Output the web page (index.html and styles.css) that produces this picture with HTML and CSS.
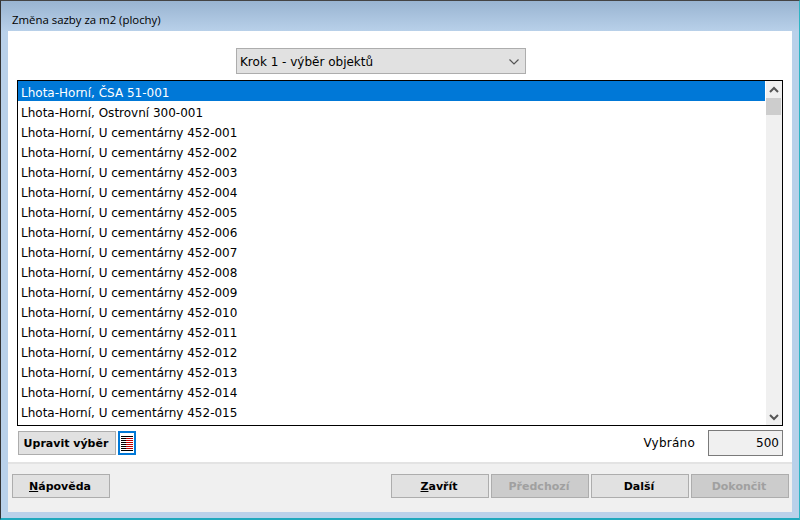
FILE: index.html
```html
<!DOCTYPE html>
<html lang="cs">
<head>
<meta charset="utf-8">
<title>Změna sazby za m2 (plochy)</title>
<link rel="stylesheet" href="styles.css">
</head>
<body>
<div class="window">
  <div class="titlebar">Změna sazby za m2 (plochy)</div>
  <div class="client">
    <div class="main">
      <div class="step-row">
        <div class="select">
          <span class="select-text">Krok 1 - výběr objektů</span>
          <svg class="chev" width="10" height="6" viewBox="0 0 10 6"><path d="M0.5 0.5 L5 5 L9.5 0.5" fill="none" stroke="#555" stroke-width="1.2"/></svg>
        </div>
      </div>
      <div class="list">
        <div class="rows">
          <div class="row selected">Lhota-Horní, ČSA 51-001</div>
          <div class="row">Lhota-Horní, Ostrovní 300-001</div>
          <div class="row">Lhota-Horní, U cementárny 452-001</div>
          <div class="row">Lhota-Horní, U cementárny 452-002</div>
          <div class="row">Lhota-Horní, U cementárny 452-003</div>
          <div class="row">Lhota-Horní, U cementárny 452-004</div>
          <div class="row">Lhota-Horní, U cementárny 452-005</div>
          <div class="row">Lhota-Horní, U cementárny 452-006</div>
          <div class="row">Lhota-Horní, U cementárny 452-007</div>
          <div class="row">Lhota-Horní, U cementárny 452-008</div>
          <div class="row">Lhota-Horní, U cementárny 452-009</div>
          <div class="row">Lhota-Horní, U cementárny 452-010</div>
          <div class="row">Lhota-Horní, U cementárny 452-011</div>
          <div class="row">Lhota-Horní, U cementárny 452-012</div>
          <div class="row">Lhota-Horní, U cementárny 452-013</div>
          <div class="row">Lhota-Horní, U cementárny 452-014</div>
          <div class="row">Lhota-Horní, U cementárny 452-015</div>
        </div>
        <div class="scrollbar">
          <svg class="arrow" width="16" height="17" viewBox="0 0 16 17"><path d="M4 11 L8 7 L12 11" fill="none" stroke="#555" stroke-width="2"/></svg>
          <div class="track"><div class="thumb"></div></div>
          <svg class="arrow" width="16" height="17" viewBox="0 0 16 17"><path d="M4 7 L8 11 L12 7" fill="none" stroke="#555" stroke-width="2"/></svg>
        </div>
      </div>
      <div class="tools">
        <button class="btn edit">Upravit výběr</button>
        <div class="icon-btn">
          <svg width="12" height="15" viewBox="0 0 12 15" shape-rendering="crispEdges">
            <rect x="0" y="0" width="12" height="1" fill="#000"/>
            <rect x="0" y="2" width="5" height="1" fill="#000"/><rect x="5" y="2" width="7" height="1" fill="#c00000"/>
            <rect x="0" y="4" width="5" height="1" fill="#000"/><rect x="5" y="4" width="7" height="1" fill="#c00000"/>
            <rect x="0" y="6" width="5" height="1" fill="#000"/><rect x="5" y="6" width="7" height="1" fill="#c00000"/>
            <rect x="0" y="8" width="5" height="1" fill="#000"/><rect x="5" y="8" width="7" height="1" fill="#c00000"/>
            <rect x="0" y="10" width="5" height="1" fill="#000"/><rect x="5" y="10" width="7" height="1" fill="#c00000"/>
            <rect x="0" y="12" width="5" height="1" fill="#000"/><rect x="5" y="12" width="7" height="1" fill="#c00000"/>
            <rect x="0" y="14" width="12" height="1" fill="#000"/>
          </svg>
        </div>
        <span class="label">Vybráno</span>
        <div class="count">500</div>
      </div>
    </div>
    <div class="footer">
      <button class="btn"><u>N</u>ápověda</button>
      <div class="nav">
        <button class="btn"><u>Z</u>avřít</button>
        <button class="btn disabled">Předchozí</button>
        <button class="btn">Další</button>
        <button class="btn disabled">Dokončit</button>
      </div>
    </div>
  </div>
</div>
</body>
</html>
```
FILE: styles.css
```css
* { box-sizing: border-box; }
html, body { margin: 0; padding: 0; }
body {
  width: 800px;
  height: 520px;
  overflow: hidden;
  font-family: "DejaVu Sans", sans-serif;
  font-size: 12px;
  color: #000;
}
.window {
  width: 800px;
  height: 520px;
  display: flex;
  flex-direction: column;
  padding: 0 7px 6px;
  background: linear-gradient(#99b4d1 0, #b9d1ea 31px);
  border-top: 1px solid #444;
  border-left: 1px solid #333;
  border-right: 1px solid #2fb5c5;
  border-bottom: 2px solid #1fa8bd;
}
.titlebar {
  height: 30px;
  flex: none;
  display: flex;
  align-items: center;
  padding: 6px 0 0 4px;
  font-family: "Open Sans", sans-serif;
  font-size: 11.4px;
}
.client {
  flex: 1;
  display: flex;
  flex-direction: column;
  background: #fff;
}
.main {
  flex: 1;
  display: flex;
  flex-direction: column;
  padding: 17px 9px 0;
}
.step-row { display: flex; padding-left: 219px; height: 26px; }
.select {
  width: 290px;
  height: 26px;
  background: #e1e1e1;
  border: 1px solid #adadad;
  display: flex;
  align-items: center;
  justify-content: space-between;
  padding: 0 3px;
}
.select-text { padding-top: 2px; }
.chev { margin-right: 3px; margin-top: 1px; }
.list {
  margin-top: 6px;
  height: 346px;
  border: 1px solid #000;
  display: flex;
  overflow: hidden;
}
.rows { flex: 1; min-width: 0; }
.row {
  height: 20px;
  line-height: 24px;
  padding-left: 3px;
  white-space: nowrap;
}
.row.selected { background: #0078d7; color: #fff; }
.scrollbar {
  width: 17px;
  flex: none;
  background: #f0f0f0;
  border-left: 1px solid #fff;
  display: flex;
  flex-direction: column;
}
.arrow { flex: none; }
.track { flex: 1; }
.thumb { height: 17px; background: #cdcdcd; margin-right: 1px; }
.tools {
  display: flex;
  align-items: center;
  height: 26px;
  margin-top: 4px;
  padding-left: 1px;
}
.btn {
  width: 98px;
  height: 24px;
  padding: 0 2px 0 0;
  background: #e1e1e1;
  border: 1px solid #adadad;
  border-radius: 0;
  font-family: "DejaVu Sans", sans-serif;
  font-size: 11px;
  font-weight: bold;
  color: #000;
}
.btn.disabled { background: #cccccc; color: #a0a0a0; }
.icon-btn {
  width: 18px;
  height: 24px;
  margin-left: 2px;
  border: 2px solid #0078d7;
  display: flex;
  align-items: center;
  justify-content: center;
  background: #fff;
}
.label { margin-left: auto; margin-right: 13px; letter-spacing: 0.25px; }
.count {
  width: 75px;
  height: 26px;
  background: #f0f0f0;
  border: 1px solid #7a7a7a;
  text-align: right;
  line-height: 24px;
  padding-right: 3px;
}
.footer {
  height: 50px;
  flex: none;
  background: #f0f0f0;
  border-top: 2px solid #e3e3e3;
  display: flex;
  justify-content: space-between;
  padding: 10px 3px 0 4px;
}
.nav { display: flex; gap: 2px; }
```
